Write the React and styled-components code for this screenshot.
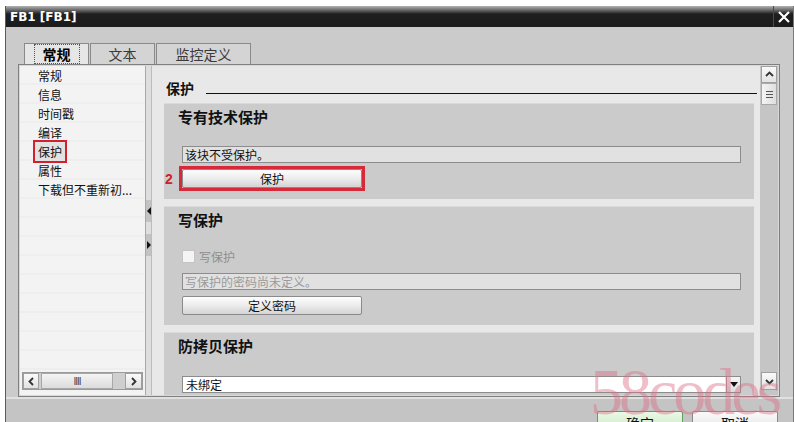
import React from 'react'
import styled, { createGlobalStyle } from 'styled-components'

const GlobalStyle = createGlobalStyle`
  body {
    margin: 0;
    background: #fff;
  }
  * {
    box-sizing: border-box;
  }
`;

const CJK = `"Noto Sans CJK SC", "Liberation Sans", sans-serif`;

const Page = styled.div`
  position: relative;
  width: 794px;
  height: 422px;
  overflow: hidden;
  background: #fff;
  padding: 6px 0 0 5px;
  font-family: ${CJK};
`;

const Window = styled.div`
  height: 416px;
  background: #cbcbcb;
  border-left: 1px solid #5a5a5a;
  border-right: 1px solid #7a7a7a;
  display: flex;
  flex-direction: column;
`;

const TitleBar = styled.div`
  height: 21px;
  flex-shrink: 0;
  display: flex;
  align-items: center;
  padding-left: 4px;
  background: linear-gradient(#b4b4b4 0, #6a6a6a 4px, #1f1f1f 8px, #1b1b1b 100%);
  color: #fff;
  font: bold 12px "DejaVu Sans", sans-serif;
`;

const CloseBtn = styled.div`
  margin-left: auto;
  width: 20px;
  height: 21px;
  border-left: 1px solid #4a4a4a;
  display: flex;
  align-items: center;
  justify-content: center;
`;

const Body = styled.div`
  padding: 16px 13px 0 12px;
`;

const Tabs = styled.div`
  display: flex;
  gap: 1px;
  margin-left: 6px;
  height: 21px;
`;

const Tab = styled.div`
  width: ${p => p.$w}px;
  height: 21px;
  border: 1px solid #8a8a8a;
  border-bottom: none;
  background: ${p => (p.$active ? '#e6e6e6' : '#d4d4d4')};
  color: ${p => (p.$active ? '#000' : '#3a3a3a')};
  font-weight: ${p => (p.$active ? 'bold' : 'normal')};
  font-size: 14px;
  line-height: 18px;
  display: flex;
  align-items: center;
  justify-content: center;
  span {
    padding: 0 8px;
    border: 1px dotted ${p => (p.$active ? '#555' : 'transparent')};
  }
`;

const Frame = styled.div`
  height: 333px;
  border: 1px solid #808080;
  padding: 1px;
  display: flex;
  background: #d8d8d8;
`;

const LeftPanel = styled.div`
  width: 125px;
  display: flex;
  flex-direction: column;
  background: repeating-linear-gradient(#f3f3f3 0, #f3f3f3 17px, #eeeeee 17px, #eeeeee 19px);
`;

const NavItem = styled.div`
  height: 19px;
  display: flex;
  align-items: center;
  padding-left: 18px;
  font-size: 12px;
  line-height: 19px;
  color: #111;
  white-space: nowrap;
`;

const Marked = styled.span`
  display: inline-block;
  height: 23px;
  line-height: 19px;
  padding: 0 3px;
  margin-left: -5px;
  border: 2px solid #d3202e;
  background: #e2e2e2;
`;

const HScroll = styled.div`
  margin: auto 2px 5px 2px;
  height: 18px;
  display: flex;
  border: 1px solid #9a9a9a;
  background: #cfcfcf;
`;

const ScrollBtn = styled.div`
  width: ${p => p.$w || 16}px;
  height: ${p => p.$h || 16}px;
  background: linear-gradient(#fafafa, #e2e2e2);
  border: 1px solid #a0a0a0;
  display: flex;
  align-items: center;
  justify-content: center;
  flex-shrink: 0;
`;

const HThumb = styled.div`
  width: 72px;
  margin-left: 2px;
  background: linear-gradient(#f4f4f4, #dcdcdc);
  border: 1px solid #a8a8a8;
  display: flex;
  align-items: center;
  justify-content: center;
  font: 10px "Liberation Sans", sans-serif;
  color: #444;
  letter-spacing: -1px;
`;

const Splitter = styled.div`
  width: 7px;
  background: #dedede;
  border-left: 1px solid #a8a8a8;
  border-right: 1px solid #bcbcbc;
  display: flex;
  flex-direction: column;
`;

const SplitArrow = styled.div`
  height: 22px;
  margin-top: ${p => p.$top}px;
  background: #c2c2c2;
  display: flex;
  align-items: center;
  justify-content: center;
  &::after {
    content: '';
    border-top: 4px solid transparent;
    border-bottom: 4px solid transparent;
    ${p => (p.$dir === 'left' ? 'border-right: 4px solid #111;' : 'border-left: 4px solid #111;')}
  }
`;

const Right = styled.div`
  width: 608px;
  background: #e8e8e8;
  padding: 0 6px 0 12px;
  display: flex;
  flex-direction: column;
  overflow: hidden;
`;

const Header = styled.div`
  height: 36px;
  flex-shrink: 0;
  display: flex;
  align-items: flex-end;
  padding: 0 0 6px 2px;
  margin-right: -3px;
  font-size: 14px;
  font-weight: bold;
  line-height: 16px;
  color: #111;
`;

const HeaderLine = styled.div`
  flex: 1;
  margin: 0 0 2px 12px;
  border-bottom: 1px solid #111;
`;

const Section = styled.div`
  flex-shrink: 0;
  margin-top: ${p => p.$mt}px;
  padding: 3px 13px ${p => p.$pb}px 18px;
  background: #cbcbcb;
  border-top: 1px solid #dadada;
  ${p => p.$grow && 'flex: 1;'}
`;

const SectionTitle = styled.div`
  margin-left: -4px;
  font-size: 15px;
  font-weight: bold;
  line-height: 20px;
  color: #111;
`;

const Field = styled.div`
  margin-top: ${p => p.$mt}px;
  height: 17px;
  border: 1px solid #8c8c8c;
  background: #e1e1e1;
  font-size: 12px;
  line-height: 15px;
  padding-left: 2px;
  color: ${p => (p.$disabled ? '#9a9a9a' : '#111')};
  white-space: nowrap;
`;

const Button = styled.div`
  width: 180px;
  height: 19px;
  margin-top: ${p => p.$mt || 0}px;
  border: 1px solid #8a8a8a;
  border-radius: 2px;
  background: linear-gradient(#fdfdfd, #ececec 50%, #d4d4d4);
  font-size: 12px;
  line-height: 17px;
  text-align: center;
  color: #111;
`;

const MarkRow = styled.div`
  margin: 3px 0 0 -17px;
  display: flex;
  align-items: center;
`;

const MarkNum = styled.span`
  width: 10px;
  margin-right: 4px;
  color: #d0202e;
  font: bold 14px "Liberation Sans", sans-serif;
`;

const RedBox = styled.div`
  border: 3px solid #d62a3a;
`;

const CheckRow = styled.div`
  margin-top: 17px;
  height: 18px;
  display: flex;
  align-items: center;
  font-size: 12px;
  color: #8f8f8f;
  i {
    width: 13px;
    height: 13px;
    margin-right: 4px;
    background: #f4f4f4;
    border: 1px solid #c4c4c4;
  }
`;

const Select = styled.div`
  margin-top: 20px;
  height: 17px;
  display: flex;
  border: 1px solid #8c8c8c;
  background: #fff;
  font-size: 12px;
  line-height: 15px;
  color: #111;
  span {
    flex: 1;
    padding-left: 3px;
  }
`;

const SelectArrow = styled.div`
  width: 14px;
  background: linear-gradient(#f6f6f6, #dcdcdc);
  border-left: 1px solid #9a9a9a;
  display: flex;
  align-items: center;
  justify-content: center;
  &::after {
    content: '';
    border-left: 4px solid transparent;
    border-right: 4px solid transparent;
    border-top: 5px solid #111;
  }
`;

const VScroll = styled.div`
  width: 18px;
  background: #c5c5c5;
  padding: 0 1px;
  display: flex;
  flex-direction: column;
`;

const VThumb = styled.div`
  height: 22px;
  background: linear-gradient(90deg, #f4f4f4, #dedede);
  border: 1px solid #a8a8a8;
  display: flex;
  align-items: center;
  justify-content: center;
`;

const Footer = styled.div`
  flex: 1;
  display: flex;
  justify-content: flex-end;
  gap: 9px;
  padding: 12px 15px 0 0;
  border-top: 2px solid #e0e0e0;
  background: #c4c4c4;
  overflow: hidden;
`;

const FootBtn = styled.div`
  width: 86px;
  height: 24px;
  border: 1px solid ${p => (p.$primary ? '#5e9e5e' : '#8a8a8a')};
  border-radius: 2px;
  background: ${p => (p.$primary ? 'linear-gradient(#eaf8e6, #c6e6be)' : 'linear-gradient(#fafafa, #e0e0e0)')};
  font-size: 14px;
  line-height: 22px;
  text-align: center;
  color: #111;
`;

const Watermark = styled.div`
  position: absolute;
  left: 590px;
  top: 359px;
  font: 66px/1 "Liberation Serif", serif;
  letter-spacing: -4px;
  color: rgba(222, 110, 135, 0.45);
  pointer-events: none;
`;

const Chevron = ({ dir, size = 9 }) => {
  const d = {
    up: 'M1 6 L4.5 2.5 L8 6',
    down: 'M1 3 L4.5 6.5 L8 3',
    left: 'M6 1 L2.5 4.5 L6 8',
    right: 'M3 1 L6.5 4.5 L3 8',
  }[dir];
  return (
    <svg width={size} height={size} viewBox="0 0 9 9">
      <path d={d} fill="none" stroke="#333" strokeWidth="1.8" />
    </svg>
  );
};

const navItems = ['常规', '信息', '时间戳', '编译', '保护', '属性', '下载但不重新初...'];

export default function App() {
  return (
    <Page>
      <GlobalStyle />
      <Window>
        <TitleBar>
          FB1 [FB1]
          <CloseBtn>
            <svg width="14" height="14" viewBox="0 0 14 14">
              <path d="M2 2 L12 12 M12 2 L2 12" stroke="#fff" strokeWidth="2.2" />
            </svg>
          </CloseBtn>
        </TitleBar>
        <Body>
          <Tabs>
            <Tab $w={65} $active><span>常规</span></Tab>
            <Tab $w={65}><span>文本</span></Tab>
            <Tab $w={95}><span>监控定义</span></Tab>
          </Tabs>
          <Frame>
            <LeftPanel>
              {navItems.map(item => (
                <NavItem key={item}>
                  {item === '保护' ? <Marked>{item}</Marked> : item}
                </NavItem>
              ))}
              <HScroll>
                <ScrollBtn $w={16} $h={16}><Chevron dir="left" /></ScrollBtn>
                <HThumb>IIII</HThumb>
                <div style={{ flex: 1 }} />
                <ScrollBtn $w={17} $h={16}><Chevron dir="right" /></ScrollBtn>
              </HScroll>
            </LeftPanel>
            <Splitter>
              <SplitArrow $top={134} $dir="left" />
              <SplitArrow $top={12} $dir="right" />
            </Splitter>
            <Right>
              <Header>
                保护
                <HeaderLine />
              </Header>
              <Section $mt={1} $pb={8}>
                <SectionTitle>专有技术保护</SectionTitle>
                <Field $mt={19}>该块不受保护。</Field>
                <MarkRow>
                  <MarkNum>2</MarkNum>
                  <RedBox>
                    <Button>保护</Button>
                  </RedBox>
                </MarkRow>
              </Section>
              <Section $mt={7} $pb={10}>
                <SectionTitle>写保护</SectionTitle>
                <CheckRow><i />写保护</CheckRow>
                <Field $mt={8} $disabled>写保护的密码尚未定义。</Field>
                <Button $mt={6}>定义密码</Button>
              </Section>
              <Section $mt={7} $pb={0} $grow>
                <SectionTitle>防拷贝保护</SectionTitle>
                <Select>
                  <span>未绑定</span>
                  <SelectArrow />
                </Select>
              </Section>
            </Right>
            <VScroll>
              <ScrollBtn $w={16} $h={17}><Chevron dir="up" /></ScrollBtn>
              <VThumb>
                <svg width="9" height="9" viewBox="0 0 9 9">
                  <path d="M1 1.5 H8 M1 4.5 H8 M1 7.5 H8" stroke="#555" strokeWidth="1" />
                </svg>
              </VThumb>
              <div style={{ flex: 1 }} />
              <ScrollBtn $w={16} $h={18} style={{ marginBottom: 5 }}><Chevron dir="down" /></ScrollBtn>
            </VScroll>
          </Frame>
        </Body>
        <Footer>
          <FootBtn $primary>确定</FootBtn>
          <FootBtn>取消</FootBtn>
        </Footer>
      </Window>
      <Watermark>58codes</Watermark>
    </Page>
  );
}
